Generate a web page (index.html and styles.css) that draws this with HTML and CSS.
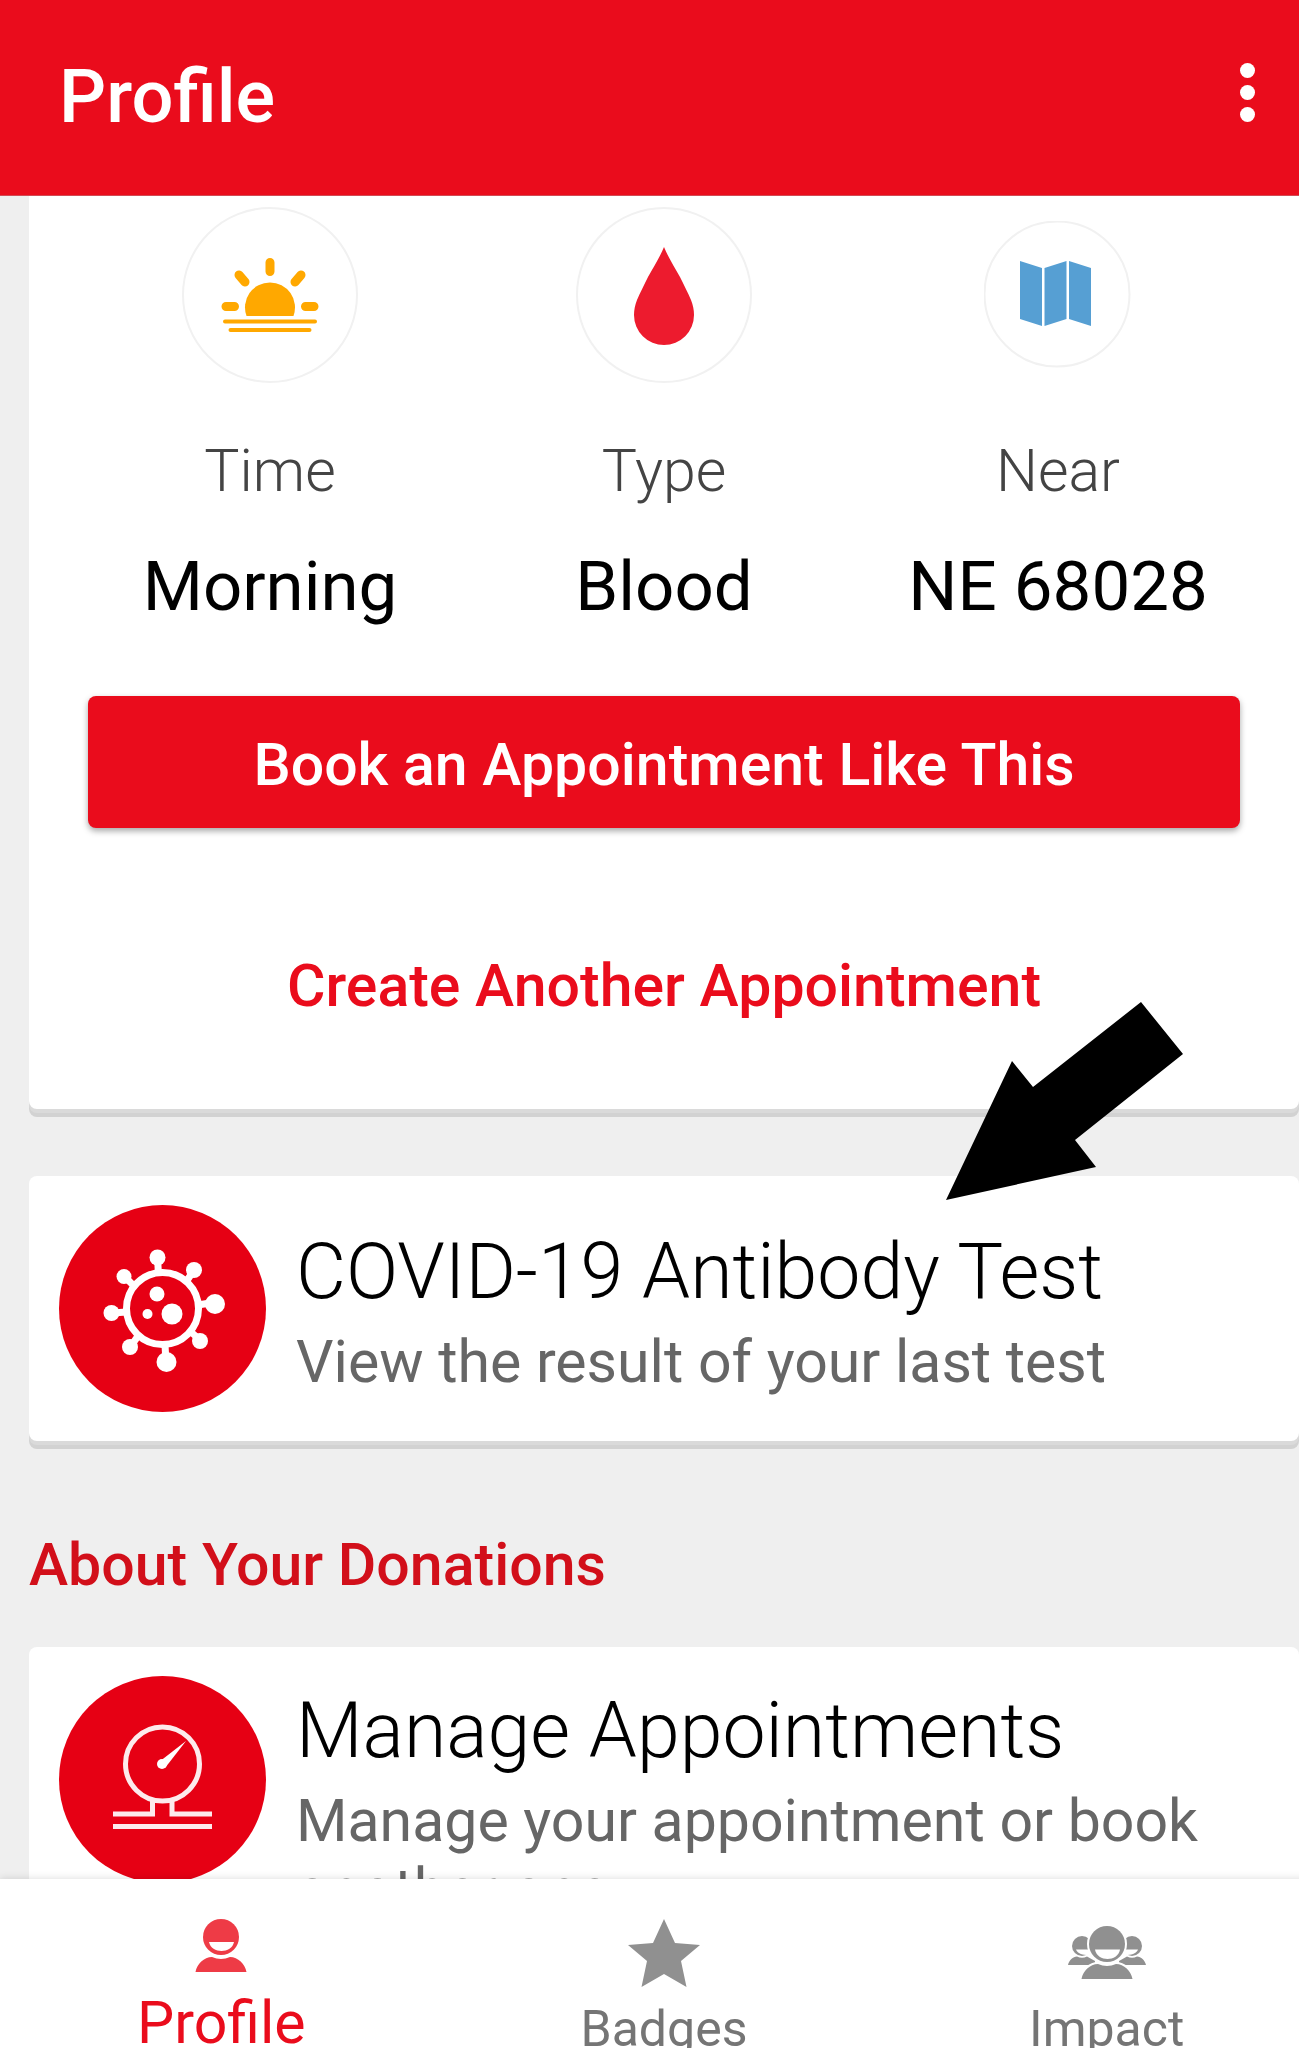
FILE: index.html
```html
<!DOCTYPE html>
<html lang="en">
<head>
    <meta charset="UTF-8">
    <meta name="viewport" content="width=device-width, initial-scale=1">
    <title>Profile</title>
    <link rel="stylesheet" href="styles.css">
</head>
<body>
    <header class="header">
        <h1>Profile</h1>
        <button class="menu-btn" type="button" aria-label="More options">
            <span></span>
            <span></span>
            <span></span>
        </button>
    </header>

    <main class="content">
        <section class="card booking">
            <div class="details">
                <div class="detail">
                    <div class="detail-icon">
                        <svg class="circle" viewBox="0 0 176 176">
                            <circle cx="88" cy="88" r="87" fill="#fff" stroke="#f1f1f1" stroke-width="2"/>
                            <g stroke="#ffa800" stroke-width="9" stroke-linecap="round">
                                <path d="M88 55.5v9M57 68l6 7M119 68l-6 7M44 99.500h8.500M123.500 99.500h8.500"/>
                                <path stroke-width="4" d="M43 114.500h90M48.500 123h79"/>
                            </g>
                            <path fill="#ffa800" d="M64.500 109a25 25 0 1 1 47 0z"/>
                        </svg>
                    </div>
                    <div class="label">Time</div>
                    <div class="value">Morning</div>
                </div>
                <div class="detail">
                    <div class="detail-icon">
                        <svg class="circle" viewBox="0 0 176 176">
                            <circle cx="88" cy="88" r="87" fill="#fff" stroke="#f1f1f1" stroke-width="2"/>
                            <path fill="#ed1b2e" d="M88 40C92 50 98 59 104 70C108 78 112 86 115 93C117 98 118 103 118 108a30 30 0 0 1-60 0C58 103 59 98 61 93C64 86 68 78 72 70C78 59 84 50 88 40z"/>
                        </svg>
                    </div>
                    <div class="label">Type</div>
                    <div class="value">Blood</div>
                </div>
                <div class="detail">
                    <div class="detail-icon">
                        <svg class="circle small" viewBox="0 0 148 148">
                            <circle cx="73" cy="73" r="72.500" fill="#fff" stroke="#f1f1f1" stroke-width="2"/>
                            <path fill="#569fd3" d="M36 40l22 7v58l-22-7zM60.500 47l22-7v58l-22 7zM85 40l22 7v58l-22-7z"/>
                        </svg>
                    </div>
                    <div class="label">Near</div>
                    <div class="value">NE 68028</div>
                </div>
            </div>
            <button class="btn btn-main" type="button">Book an Appointment Like This</button>
            <button class="btn btn-link" type="button">Create Another Appointment</button>
        </section>

        <a class="card item" href="#">
            <svg class="item-icon" viewBox="0 0 207 207">
                <circle cx="103.500" cy="103.500" r="103.500" fill="#e60014"/>
                <g fill="none" stroke="#fff">
                    <circle cx="103.500" cy="103.500" r="36" stroke-width="7"/>
                    <path stroke-width="7" d="M98.500 52l1 18M135 65l-8 12M65 71l9 9M151 98l-12 2M54 108l13-1M141 135l-9-8M72 141l7-10M107 157l-1-17"/>
                </g>
                <g fill="#fff">
                    <circle cx="98.500" cy="52.500" r="8"/>
                    <circle cx="135" cy="65" r="8"/>
                    <circle cx="65" cy="71.500" r="7.500"/>
                    <circle cx="156" cy="99" r="10"/>
                    <circle cx="52.500" cy="108" r="8"/>
                    <circle cx="141" cy="136" r="8"/>
                    <circle cx="71" cy="142" r="8"/>
                    <circle cx="107.500" cy="157" r="10"/>
                    <circle cx="98" cy="89" r="7.500"/>
                    <circle cx="88.500" cy="109" r="5"/>
                    <circle cx="113" cy="109" r="10.500"/>
                </g>
            </svg>
            <div class="item-text">
                <h2>COVID-19 Antibody Test</h2>
                <p>View the result of your last test</p>
            </div>
            <svg class="arrow" viewBox="0 0 237 198">
                <path d="M195 0L237 52L129 138L150 165L0 198L66 59L87 85z"/>
            </svg>
        </a>

        <h3 class="section-title">About Your Donations</h3>

        <a class="card item" href="#">
            <svg class="item-icon" viewBox="0 0 207 207">
                <circle cx="103.500" cy="103.500" r="103.500" fill="#e60014"/>
                <g fill="none" stroke="#fdeaec" stroke-width="5">
                    <circle cx="103.500" cy="88" r="37"/>
                    <path d="M93.500 124v14H54M113 124v14h40M54 150.500h99"/>
                </g>
                <circle cx="103" cy="88" r="5" fill="#fff"/>
                <path fill="#fff" d="M100 86L127 65L106 92z"/>
            </svg>
            <div class="item-text">
                <h2>Manage Appointments</h2>
                <p>Manage your appointment or book another one</p>
            </div>
        </a>
    </main>

    <nav class="tabs">
        <a class="tab current" href="#">
            <svg viewBox="0 0 80 80">
                <circle cx="40" cy="26" r="18"/>
                <path d="M14.500 61C16 53 23 46 31 46Q40 50 49 46C57 46 64 53 65.500 61z"/>
                <path fill="#fff" d="M28 31h25C52 37 46 40 40.500 40S29 37 28 31z"/>
            </svg>
            <span>Profile</span>
        </a>
        <a class="tab" href="#">
            <svg viewBox="0 0 80 80">
                <path d="M40 8L51 32L76 34L57 50L62.500 76L40 63L17.500 76L23 50L4 34L29 32z"/>
            </svg>
            <span>Badges</span>
        </a>
        <a class="tab" href="#">
            <svg viewBox="0 0 80 80">
                <circle cx="15" cy="35" r="10"/>
                <circle cx="65" cy="35" r="10"/>
                <path d="M1 54C2 49 6 46 10 45.500Q15 48 20 45.500L28 50V54zM79 54C78 49 74 46 70 45.500Q65 48 60 45.500L52 50V54z"/>
                <path fill="#fff" d="M9 38.500h14v5C16 45 10 42 9 38.500zM71 38.500H57v5C64 45 70 42 71 38.500z"/>
                <g stroke="#fff" stroke-width="4" paint-order="stroke">
                    <path d="M14.500 68C16 60 23 53 31 53Q40 57 49 53C57 53 64 60 65.500 68z"/>
                    <circle cx="40" cy="33" r="18"/>
                </g>
                <path fill="#fff" d="M28 38.500h25C52 45 46 48 40.500 48S29 45 28 38.500z"/>
            </svg>
            <span>Impact</span>
        </a>
    </nav>
</body>
</html>
```
FILE: styles.css
```css
*{
    box-sizing: border-box;
}
body{
    margin: 0;
    height: 100vh;
    display: flex;
    flex-direction: column;
    overflow: hidden;
    background-color: #efefef;
    font-family: Roboto, "Liberation Sans", sans-serif;
    color: #000;
}
h1, h2, h3, p{
    margin: 0;
}
a{
    color: inherit;
    text-decoration: none;
}
button{
    border: none;
    background: none;
    font-family: inherit;
    cursor: pointer;
}
svg{
    display: block;
}

/* top bar */
.header{
    flex: none;
    display: flex;
    justify-content: space-between;
    align-items: center;
    height: 196px;
    padding: 0 40px 10px 59px;
    background-color: #ea0c1c;
    color: #fff;
    border-bottom: 1px solid #d24a54;
}
.header h1{
    padding-top: 8px;
    font-size: 74px;
    line-height: 88px;
    font-weight: 500;
}
.menu-btn{
    display: flex;
    flex-direction: column;
    align-items: center;
    gap: 7px;
    width: 24px;
    padding: 0;
}
.menu-btn span{
    width: 15px;
    height: 15px;
    border-radius: 50%;
    background-color: #fff;
}

.content{
    flex: 1;
    min-height: 0;
    overflow: hidden;
    padding-left: 29px;
}
.card{
    background-color: #fff;
    border-radius: 8px;
    box-shadow: 0 4px 0 #dadada, 0 8px 0 #d2d2d2;
}

/* favourite appointment */
.booking{
    display: flex;
    flex-direction: column;
    padding: 11px 59px 60px;
    border-radius: 0 0 8px 8px;
}
.details{
    display: grid;
    grid-template-columns: repeat(3, 1fr);
    margin: 0 -15px 69px;
    text-align: center;
}
.detail-icon{
    display: flex;
    justify-content: center;
    align-items: center;
    height: 176px;
    margin-bottom: 53px;
}
.circle{
    width: 176px;
    height: 176px;
}
.circle.small{
    width: 148px;
    height: 148px;
}
.label{
    margin-bottom: 42px;
    font-size: 59px;
    line-height: 69px;
    font-weight: 300;
    color: #444;
}
.value{
    font-size: 69px;
    line-height: 80px;
}
.btn{
    height: 132px;
    padding: 4px 0 0;
    border-radius: 8px;
    font-size: 59px;
    line-height: 69px;
    font-weight: 500;
}
.btn-main{
    margin-bottom: 89px;
    background-color: #ea0c1c;
    color: #fff;
    box-shadow: 0 3px 6px rgba(0, 0, 0, 0.35);
}
.btn-link{
    color: #ea0c1c;
}

/* list items */
.item{
    position: relative;
    display: flex;
    gap: 30px;
    margin-top: 67px;
    padding: 29px 30px;
}
.item-icon{
    flex: none;
    width: 207px;
    height: 207px;
}
.item-text{
    align-self: center;
    padding: 10px 0 4px;
}
.item-text h2{
    margin-bottom: 10px;
    font-size: 77px;
    line-height: 90px;
    font-weight: 300;
}
.item-text p{
    font-size: 59px;
    line-height: 69px;
    color: #666;
}
.arrow{
    position: absolute;
    top: -174px;
    right: 116px;
    width: 237px;
    height: 198px;
}
.section-title{
    margin: 89px 0 48px;
    font-size: 59px;
    line-height: 69px;
    font-weight: 500;
    color: #d20f1a;
}
.section-title + .item{
    margin-top: 0;
}

/* bottom tabs, the row runs a little past the right edge */
.tabs{
    flex: none;
    display: grid;
    grid-template-columns: repeat(3, 1fr);
    height: 169px;
    margin-right: -29px;
    padding-top: 32px;
    background-color: #fff;
    box-shadow: 0 0 8px rgba(0, 0, 0, 0.15);
    z-index: 1;
}
.tab{
    display: flex;
    flex-direction: column;
    align-items: center;
    font-size: 50px;
    line-height: 76px;
    color: #757575;
}
.tab svg{
    flex: none;
    width: 80px;
    height: 80px;
    fill: #909090;
}
.tab.current{
    font-size: 59px;
    line-height: 64px;
    color: #ea0c1c;
}
.tab.current svg{
    fill: #ee3b46;
}
```
